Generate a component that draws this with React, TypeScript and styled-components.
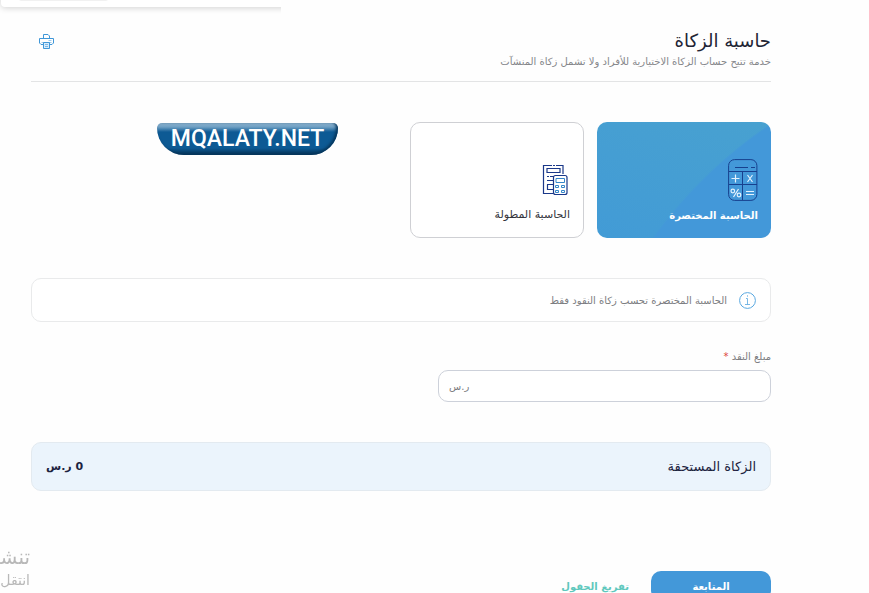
import React, { useState } from "react";
import styled, { createGlobalStyle, css } from "styled-components";

const GlobalStyle = createGlobalStyle`
  *, *::before, *::after { box-sizing: border-box; }
  body {
    margin: 0;
    background: #fefefe;
    color: #212434;
    font-family: "DejaVu Sans", "Noto Sans", sans-serif;
    overflow-x: hidden;
  }
  button, input { font: inherit; }
`;

const Page = styled.div`
  position: relative;
  direction: rtl;
  padding-inline: 98px 31px;
`;

const FloatingPanel = styled.div`
  position: absolute;
  top: 0;
  left: 0;
  width: 281px;
  height: 24px;
  overflow: hidden;

  &::before {
    content: "";
    position: absolute;
    left: 1px;
    top: -20px;
    width: 320px;
    height: 27px;
    border-radius: 4px;
    background: #fff;
    box-shadow: 0 1px 6px rgba(0, 0, 0, 0.18);
  }

  &::after {
    content: "";
    position: absolute;
    left: 18px;
    top: -9px;
    width: 91px;
    height: 10px;
    border-radius: 4px;
    background: #f1f1f1;
  }
`;

const Header = styled.header`
  display: flex;
  justify-content: space-between;
  align-items: flex-start;
  padding-top: 29px;
  height: 82px;
  border-bottom: 1px solid #e3e4e5;
`;

const Title = styled.h1`
  margin: 0;
  font-size: 18px;
  line-height: 24px;
  font-weight: 400;
`;

const Subtitle = styled.p`
  margin: 0;
  font-size: 10px;
  line-height: 18px;
  color: #85868a;
`;

const IconButton = styled.button`
  display: flex;
  margin: 5px 0 0;
  margin-inline-end: 8px;
  padding: 0;
  border: 0;
  background: none;
  color: #3f97d8;
  cursor: pointer;
`;

const Options = styled.section`
  display: flex;
  align-items: flex-start;
  gap: 13px;
  margin-top: 40px;
`;

const OptionCard = styled.button<{ $active: boolean }>`
  flex: 0 1 174px;
  height: 116px;
  display: flex;
  flex-direction: column;
  justify-content: flex-end;
  align-items: flex-start;
  gap: 5px;
  padding: 0 13px 12px;
  border-radius: 10px;
  border: 1px solid #cfd0d4;
  background: #fff;
  color: #33343c;
  font-size: 11px;
  line-height: 20px;
  white-space: nowrap;
  cursor: pointer;
  ${({ $active }) =>
    $active &&
    css`
      border: 0;
      color: #fff;
      font-weight: 700;
      font-size: 10px;
      background: radial-gradient(circle at 430px 384px, #4398d9 0 459px, transparent 461px),
        linear-gradient(20deg, #429bd6, #48a1d0);
    `}
`;

const Brand = styled.div`
  margin: 1px auto 0 126px;
  width: 181px;
  height: 32px;
  display: flex;
  justify-content: center;
  align-items: center;
  direction: ltr;
  border-radius: 6px 6px 32px 32px;
  background: linear-gradient(#8db3cf 0, #6e9fc3 4px, #0d5a94 9px, #0d5a94 25px, #06365c 31px);
  box-shadow: inset -2px -1px 3px #06365c;
  color: #fff;
  font-family: Roboto, sans-serif;
  font-size: 23px;
  font-weight: 500;
  line-height: 32px;
`;

const Notice = styled.section`
  display: flex;
  align-items: center;
  gap: 12px;
  margin-top: 40px;
  height: 44px;
  padding-inline: 14px;
  border: 1px solid #e9eaeb;
  border-radius: 10px;
  background: #fff;
  color: #7c7d81;
  font-size: 10px;
`;

const Field = styled.div`
  width: 45%;
  margin-top: 26px;
`;

const Label = styled.label`
  display: block;
  font-size: 10px;
  line-height: 18px;
  margin-bottom: 4px;
  color: #7c7d81;
`;

const Required = styled.span`
  color: #dc4040;
`;

const InputBox = styled.div`
  display: flex;
  align-items: center;
  height: 32px;
  padding-inline: 10px;
  border: 1px solid #cdd1da;
  border-radius: 10px;
  background: #fff;
  color: #7c7d81;
  font-size: 10px;
`;

const AmountInput = styled.input`
  flex: 1;
  min-width: 0;
  border: 0;
  outline: 0;
  background: none;
  color: #212434;
`;

const Summary = styled.section`
  display: flex;
  justify-content: space-between;
  align-items: center;
  margin-top: 40px;
  height: 49px;
  padding-inline: 14px;
  border: 1px solid #e3eaf0;
  border-radius: 10px;
  background: #ebf4fc;
  color: #1c2340;
  font-size: 13px;
`;

const Total = styled.strong`
  font-size: 11px;
`;

const Actions = styled.footer`
  display: flex;
  align-items: flex-start;
  gap: 22px;
  margin-top: 80px;
`;

const ActionButton = styled.button<{ $primary?: boolean }>`
  height: 30px;
  padding: 0;
  border: 0;
  border-radius: 10px;
  background: none;
  color: #5ec8bd;
  font-size: 10px;
  font-weight: 700;
  cursor: pointer;
  ${({ $primary }) =>
    $primary &&
    css`
      width: 120px;
      background: #4398d9;
      color: #fff;
    `}
`;

const SystemNote = styled.aside`
  position: fixed;
  left: 0;
  bottom: 0;
  width: 30px;
  height: 48px;
  overflow: hidden;
  direction: rtl;
  white-space: nowrap;
  color: #b8b8b8;
  font-size: 14px;
  line-height: 22px;
`;

const NoteTitle = styled.div`
  font-size: 20px;
  line-height: 24px;
`;

const PrinterIcon = () => (
  <svg width="15" height="15" viewBox="0 0 15 15" fill="none" stroke="currentColor" aria-hidden="true">
    <path d="M4.500 4V.500H9L10.500 2v2M4 10.500H2L.500 9V4.500h14V9L13 10.500h-2" />
    <path d="M2.500 8.500h10M9.500 6.500h3" strokeOpacity=".5" />
    <path d="M4.500 8.500h6v6h-6z" fill="#d8ebfa" />
    <path d="M6 10.500h3M6 12.500h3" strokeOpacity=".6" />
  </svg>
);

const CalculatorIcon = () => (
  <svg width="30" height="42" viewBox="0 0 30 42" fill="none" aria-hidden="true">
    <g stroke="#17408e">
      <rect x=".6" y=".6" width="28.300" height="40.800" rx="6" />
      <path d="M1 12.500h28M1 25.500h28M14.500 12.500V41M7 8.500h13M23 8.500h4" />
    </g>
    <g stroke="#e4f2fd" strokeWidth="1.200">
      <path d="M3.500 19.500h8M7.500 15.500v8M19.500 16l5 7M24.500 16l-5 7M18 32.500h8M18 35.500h8M10.500 30l-5 8" />
      <circle cx="4.800" cy="32" r="1.800" />
      <circle cx="11" cy="36" r="1.800" />
    </g>
  </svg>
);

const ReportIcon = () => (
  <svg width="28" height="36" viewBox="0 0 28 36" fill="none" aria-hidden="true">
    <g stroke="#1a3889" strokeWidth="1.200">
      <path d="M10 1.500H1.500v28H11M11 1.500h2M14 1.500h7V10" />
      <path d="M5 4.500h13v4H5zM5 12.500h2M8 12.500h4M5 16.500h6M5 20.500h6M11 25.500H5.500v-5" />
      <rect x="11.500" y="11.500" width="13.500" height="19" rx="2" fill="#fff" />
    </g>
    <g stroke="#3486c9">
      <path d="M14 14.500h8.500v4H14z" />
      <path d="M13.500 21.500h3v2h-3zM19.500 21.500h3v2h-3zM13.500 26.500h3v2h-3zM19.500 26.500h3v2h-3z" />
    </g>
  </svg>
);

const InfoIcon = () => (
  <svg width="17" height="17" viewBox="0 0 17 17" fill="none" stroke="#59a8e0" aria-hidden="true">
    <circle cx="8.500" cy="8.500" r="7.900" />
    <path d="M8.500 3.300v1.400M7 6.500h1.500v6M6 12.500h5" strokeOpacity=".8" />
  </svg>
);

export default function App() {
  const [mode, setMode] = useState("short");
  const [amount, setAmount] = useState("");

  return (
    <>
      <GlobalStyle />
      <FloatingPanel />
      <Page>
        <Header>
          <div>
            <Title>حاسبة الزكاة</Title>
            <Subtitle>خدمة تتيح حساب الزكاة الاختيارية للأفراد ولا تشمل زكاة المنشآت</Subtitle>
          </div>
          <IconButton type="button" aria-label="طباعة">
            <PrinterIcon />
          </IconButton>
        </Header>

        <Options>
          <OptionCard type="button" $active={mode === "short"} onClick={() => setMode("short")}>
            <CalculatorIcon />
            الحاسبة المختصرة
          </OptionCard>
          <OptionCard type="button" $active={mode === "long"} onClick={() => setMode("long")}>
            <ReportIcon />
            الحاسبة المطولة
          </OptionCard>
          <Brand>MQALATY.NET</Brand>
        </Options>

        <Notice>
          <InfoIcon />
          الحاسبة المختصرة تحسب زكاة النقود فقط
        </Notice>

        <Field>
          <Label htmlFor="cash">
            مبلغ النقد <Required>*</Required>
          </Label>
          <InputBox>
            <AmountInput
              id="cash"
              inputMode="decimal"
              value={amount}
              onChange={(event) => setAmount(event.target.value)}
            />
            <span>ر.س</span>
          </InputBox>
        </Field>

        <Summary>
          <span>الزكاة المستحقة</span>
          <Total>{Number(amount) * 0.025 || 0} ر.س</Total>
        </Summary>

        <Actions>
          <ActionButton type="button" $primary>
            المتابعة
          </ActionButton>
          <ActionButton type="button" onClick={() => setAmount("")}>
            تفريغ الحقول
          </ActionButton>
        </Actions>
      </Page>
      <SystemNote>
        <NoteTitle>تنشيط</NoteTitle>
        انتقل
      </SystemNote>
    </>
  );
}
